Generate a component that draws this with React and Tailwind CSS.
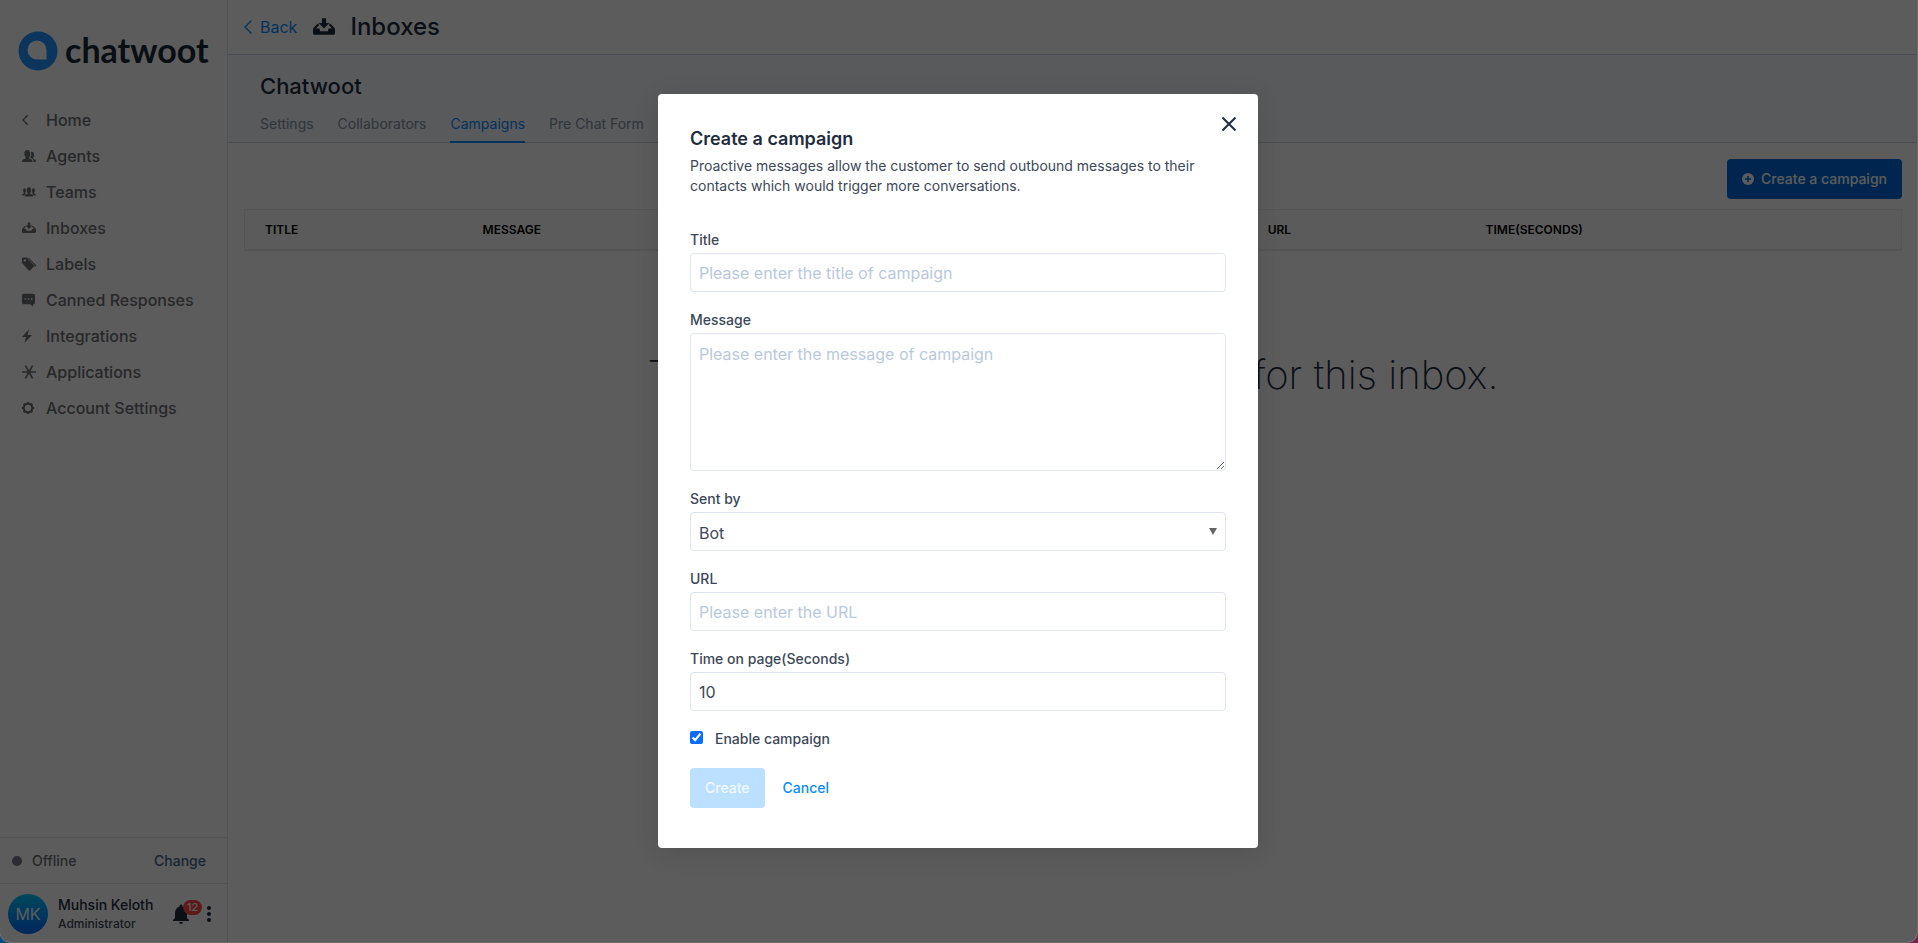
import { MdNotifications } from "react-icons/md";

const GEAR_TEETH = [0, 45, 90, 135, 180, 225, 270, 315];

function Glyph({ name, className }) {
  const common = { viewBox: "0 0 14 14", fill: "currentColor", className, "aria-hidden": true };
  switch (name) {
    case "home":
      return (
        <svg {...common} fill="none" stroke="currentColor" strokeWidth="1.3">
          <path d="M5.6 2.2 1 7l4.6 4.8" />
        </svg>
      );
    case "agents":
      return (
        <svg {...common}>
          <path d="M8.9 10.3C8 10 7.100 9.700 7.100 9.100v-.9c.6-.6.800-1.200.9-1.900.4-.3.500-1.100.2-1.500C8.400 2.800 7.600 1 5.300 1S2.300 2.800 2.500 4.800c-.3.400-.2 1.200.2 1.500.1.700.300 1.300.9 1.900v.9c0 .6-1 .9-2 1.200C.4 10.700 0 11.500 0 13h10.500c0-1.500-.4-2.300-1.600-2.700z" />
          <path d="M12.700 10.500c-.8-.2-1.600-.5-1.600-1v-.7c.5-.5.700-1 .8-1.600.3-.2.400-.9.100-1.200.1-1.600-.4-3.200-2.300-3.200-.3 0-.6 0-.8.100.2.600.3 1.300.3 1.900.3.600.1 1.300-.3 1.800-.1.600-.4 1.200-.8 1.700v.4c.3.300 1 .500 1.600.7 1.300.5 1.800 1.500 1.800 3.600H14c0-1.400-.2-2.200-1.300-2.500z" />
        </svg>
      );
    case "teams":
      return (
        <svg {...common}>
          <path d="M9.800 9.600C9 9.300 8.200 9.100 8.200 8.600V8c.5-.5.700-1 .8-1.600.3-.2.400-.9.100-1.100C9.200 3.600 8.800 2.200 7 2.200S4.800 3.600 4.900 5.300c-.3.200-.2.900.1 1.100.1.600.3 1.100.8 1.600v.6c0 .5-.8.700-1.600 1-.9.300-1.200.9-1.300 2h8.200c-.1-1.100-.4-1.700-1.300-2z" />
          <path d="M4.200 9c-.6-.3-.9-.4-.9-.8v-.4c.4-.4.500-.8.600-1.200.1-.1.200-.5.100-.8C4 4.500 3.900 3.300 2.600 3.300S1.100 4.500 1.200 5.800c-.2.200-.1.700.1.900.1.400.2.800.5 1.100v.5c0 .3-.5.500-.9.700-.6.200-.9.600-.9 1.400h2.500C2.900 9.700 3.500 9.300 4.200 9zM9.800 9c.6-.3.900-.4.900-.8v-.4c-.4-.4-.5-.8-.6-1.200-.1-.1-.2-.5-.1-.8 0-1.300.1-2.500 1.400-2.500s1.500 1.200 1.400 2.500c.2.200.1.700-.1.900-.1.400-.2.800-.5 1.100v.5c0 .3.500.5.900.7.600.2.900.6.900 1.400h-2.500C11.100 9.700 10.500 9.300 9.800 9z" />
        </svg>
      );
    case "inboxes":
      return (
        <svg {...common}>
          <path d="M5.700 1.500h2.600v3h2.100L7 7.900 3.600 4.500h2.100z" />
          <path d="M3.100 4.700.7 7.200C.2 7.700 0 8.100 0 8.700v2.100c0 .7.500 1.200 1.200 1.200h11.600c.7 0 1.200-.5 1.200-1.200V8.700c0-.6-.2-1-.7-1.500l-2.400-2.500-.9.900 2 2.300H9.900L9.500 9.700h-5L4.100 7.900H2l2-2.300z" />
        </svg>
      );
    case "labels":
      return (
        <svg {...common}>
          <path fillRule="evenodd" d="M0 1.700v3.700c0 .5.200.9.500 1.200l6.300 7c.3.400.8.400 1.200 0l3.900-4c.3-.3.300-.8 0-1.200L5.300 1C4.900.6 4.500.4 4 .4H1.200C.5.400 0 1 0 1.700zm2.900 2.900a1.200 1.200 0 1 1 0-2.400 1.200 1.200 0 0 1 0 2.400z" />
          <path d="M5.500.4c.6 0 1 .2 1.400.6l6.800 6.700c.4.400.4.900 0 1.300l-1 1-.3-.6c.3-.5.3-1-.2-1.500z" />
        </svg>
      );
    case "canned":
      return (
        <svg {...common}>
          <path fillRule="evenodd" d="M1.800.7h9.400C12.300.7 13 1.400 13 2.500v7c0 1.100-.7 1.800-1.800 1.800H11v2.400l-2.700-2.400H1.800C.7 11.300 0 10.600 0 9.500v-7C0 1.400.7.700 1.800.7zM2.700 5.300v1.500h1.500V5.300zm3.100 0v1.500h1.500V5.300zm3.100 0v1.500h1.500V5.300z" />
        </svg>
      );
    case "integrations":
      return (
        <svg {...common}>
          <path d="M7 .2 0 8.100h4.100L2.400 13.800 10 5.900H5.500z" />
        </svg>
      );
    case "applications":
      return (
        <svg {...common} fill="none" stroke="currentColor" strokeWidth="1.7">
          <path d="M0 7h14M3.500.6l7 12.800M10.500.6l-7 12.800" />
        </svg>
      );
    case "settings":
      return (
        <svg {...common}>
          <circle cx="6" cy="7" r="4.200" fill="none" stroke="currentColor" strokeWidth="2" />
          {GEAR_TEETH.map((angle) => (
            <path key={angle} d="M4.500 2.600 5 .9h2l.5 1.700z" transform={`rotate(${angle} 6 7)`} />
          ))}
        </svg>
      );
    default:
      return null;
  }
}

const NAV = [
  ["home", "Home"],
  ["agents", "Agents"],
  ["teams", "Teams"],
  ["inboxes", "Inboxes"],
  ["labels", "Labels"],
  ["canned", "Canned Responses"],
  ["integrations", "Integrations"],
  ["applications", "Applications"],
  ["settings", "Account Settings"],
];

const TABS = ["Settings", "Collaborators", "Campaigns", "Pre Chat Form"];

function Sidebar() {
  return (
    <aside className="flex w-[228px] shrink-0 flex-col border-r border-[#e0e6ed] bg-white">
      <a href="#" className="flex h-[102px] items-center gap-[7px] pl-[18px]" aria-label="chatwoot">
        <svg viewBox="0 0 40 40" className="size-10 shrink-0" aria-hidden="true">
          <circle cx="20" cy="20" r="19.500" fill="#1f93ff" />
          <path d="M28.500 28.500H19A9.500 9.500 0 1 1 28.500 19z" fill="#fff" />
        </svg>
        <span className="pb-[2px] font-['Lato',sans-serif] text-[34px] leading-10 font-bold text-[#1b2836]">chatwoot</span>
      </a>
      <nav className="flex grow flex-col">
        {NAV.map(([icon, label]) => (
          <a key={icon} href="#" className="flex h-9 items-center gap-[10px] pl-[22px] text-base font-medium text-[#6e6f73]">
            <Glyph name={icon} className="size-[14px]" />
            {label}
          </a>
        ))}
      </nav>
      <div className="flex h-[46px] items-center border-t border-[#e0e6ed] pr-[21px] pl-3 text-sm">
        <span className="mr-[10px] size-[10px] rounded-full bg-[#778]" />
        <span className="grow font-medium text-[#6e6f73]">Offline</span>
        <button type="button" className="font-medium text-[#47688e]">Change</button>
      </div>
      <div className="flex h-[59px] items-center border-t border-[#e0e6ed] pt-px pr-[10px] pl-2">
        <span className="flex size-10 items-center justify-center rounded-full bg-linear-to-b from-[#00c6ff] to-[#0068ff] text-base text-white">MK</span>
        <div className="ml-[10px] grow">
          <p className="text-sm leading-5 font-medium text-[#1f2d3d]">Muhsin Keloth</p>
          <p className="text-xs leading-[18px] font-medium text-[#3c4858]">Administrator</p>
        </div>
        <button type="button" aria-label="Notifications" className="relative mr-2 text-[#1f2d3d]">
          <MdNotifications className="size-6" />
          <span className="absolute -top-[2px] left-[14px] rounded-full bg-[#ff4949] px-1 text-[11px] leading-[15px] font-medium text-white">12</span>
        </button>
        <button type="button" aria-label="Options" className="flex w-4 flex-col items-center gap-[2px]">
          <span className="size-1 rounded-full bg-[#1f2d3d]" />
          <span className="size-1 rounded-full bg-[#1f2d3d]" />
          <span className="size-1 rounded-full bg-[#1f2d3d]" />
        </button>
      </div>
    </aside>
  );
}

function Page() {
  return (
    <main className="flex min-w-0 grow flex-col bg-white">
      <header className="flex h-[55px] items-center border-b border-[#c8d6e6] px-4">
        <a href="#" className="flex items-center gap-2 text-base text-[#0a8cff]">
          <svg viewBox="0 0 8 14" className="h-[14px] w-2" fill="none" stroke="currentColor" strokeWidth="1.200" aria-hidden="true">
            <path d="M7.500.5 1 7l6.500 6.500" />
          </svg>
          Back
        </a>
        <Glyph name="inboxes" className="ml-4 size-[22px] text-[#1f2d3d]" />
        <h1 className="ml-[15px] text-2xl font-medium text-[#1f2d3d]">Inboxes</h1>
      </header>
      <section className="flex h-[88px] flex-col justify-between border-b border-[#c8d6e6] bg-[#f7f9fc] pl-8">
        <h2 className="pt-[15px] text-[22px] leading-8 font-medium text-[#1f2d3d]">Chatwoot</h2>
        <div className="-mb-px flex gap-6 text-sm">
          {TABS.map((tab) => (
            <a
              key={tab}
              href="#"
              className={
                tab === "Campaigns"
                  ? "border-b-2 border-[#0a8cff] pb-[7px] text-[#0a8cff]"
                  : "border-b-2 border-transparent pb-[7px] text-[#8492a6]"
              }
            >
              {tab}
            </a>
          ))}
        </div>
      </section>
      <section className="flex flex-col py-4 pr-[15px] pl-4">
        <button type="button" className="flex h-10 items-center gap-[7px] self-end rounded bg-[#006bdb] px-[15px] text-sm font-medium text-white">
          <svg viewBox="0 0 12 12" className="size-3" aria-hidden="true">
            <circle cx="6" cy="6" r="6" fill="currentColor" />
            <path d="M6 3v6M3 6h6" stroke="#006bdb" strokeWidth="1.500" />
          </svg>
          Create a campaign
        </button>
        <table className="mt-[10px] w-full table-fixed border border-b-2 border-[#ececec] bg-[#fcfcfc] text-left text-xs">
          <thead>
            <tr className="h-10 [&>th]:pt-px [&>th]:font-semibold">
              <th className="w-[14.370%] pl-5">TITLE</th>
              <th className="w-[13.150%]">MESSAGE</th>
              <td colSpan={2} />
              <th className="w-[13.150%]">URL</th>
              <th className="w-[25.100%]">TIME(SECONDS)</th>
            </tr>
          </thead>
        </table>
        <p className="mt-[100px] text-center text-[40px] leading-[48px] font-extralight text-[#1f2d3d]">
          There are no campaigns created for this inbox.
        </p>
      </section>
    </main>
  );
}

const LABEL = "block pb-[2px] text-sm leading-[23px] font-medium text-[#3c4858]";
const CONTROL =
  "block h-[39px] w-full rounded border border-[#dde4ee] bg-white px-2 text-base text-[#3c4858] placeholder:text-[#b9c9dc]";

function CampaignDialog() {
  return (
    <div role="dialog" aria-modal="true" aria-labelledby="dialog-title" className="relative w-[600px] rounded bg-white px-8 pt-8 pb-10 shadow-[0_4px_24px_rgba(0,0,0,0.12)]">
      <button type="button" aria-label="Close" className="absolute top-[23px] right-[22px] text-[#1f2d3d]">
        <svg viewBox="0 0 14 14" className="size-[14px]" fill="none" stroke="currentColor" strokeWidth="2" aria-hidden="true">
          <path d="M.5.5l13 13M13.500.5l-13 13" />
        </svg>
      </button>
      <h2 id="dialog-title" className="text-lg leading-[26px] font-semibold text-[#1f2d3d]">Create a campaign</h2>
      <p className="mt-1 text-sm text-[#3c4858]">
        Proactive messages allow the customer to send outbound messages to their contacts which would trigger more conversations.
      </p>
      <form className="mt-8 flex flex-col gap-4">
        <div>
          <label htmlFor="title" className={LABEL}>Title</label>
          <input id="title" type="text" placeholder="Please enter the title of campaign" className={CONTROL} />
        </div>
        <div>
          <label htmlFor="message" className={LABEL}>Message</label>
          <textarea id="message" placeholder="Please enter the message of campaign" className="block h-[138px] w-full resize rounded border border-[#dde4ee] bg-white p-2 text-base text-[#3c4858] placeholder:text-[#b9c9dc]" />
        </div>
        <div>
          <label htmlFor="sender" className={LABEL}>Sent by</label>
          <div className="relative">
            <select id="sender" className={CONTROL + " appearance-none pt-[2px]"}>
              <option>Bot</option>
            </select>
            <svg viewBox="0 0 8 7" className="pointer-events-none absolute top-4 right-[9px] h-[7px] w-2" aria-hidden="true">
              <path d="M0 0h8L4 7z" fill="#666" />
            </svg>
          </div>
        </div>
        <div>
          <label htmlFor="url" className={LABEL}>URL</label>
          <input id="url" type="text" placeholder="Please enter the URL" className={CONTROL} />
        </div>
        <div>
          <label htmlFor="time" className={LABEL}>Time on page(Seconds)</label>
          <input id="time" type="text" defaultValue="10" className={CONTROL} />
        </div>
        <div className="flex h-[25px] items-start gap-3">
          <input id="enabled" type="checkbox" defaultChecked className="mt-1 size-[13px] accent-[#0a6cff]" />
          <label htmlFor="enabled" className={LABEL}>Enable campaign</label>
        </div>
        <div className="flex items-center gap-[18px] text-sm font-medium">
          <button type="submit" disabled className="h-10 rounded bg-[#bce0ff] px-[15px] text-[#f0f8ff]">Create</button>
          <button type="button" className="text-[#0a8cff]">Cancel</button>
        </div>
      </form>
    </div>
  );
}

export default function App() {
  return (
    <div className="flex min-h-screen bg-linear-to-r from-[#0b4a80] to-[#7a1c4c] font-['Inter',sans-serif]">
      <div className="relative flex grow overflow-hidden rounded-b-[10px] border-r border-b border-[#6c6c6c]">
        <Sidebar />
        <Page />
        <div className="absolute inset-0 flex items-center justify-center bg-black/64 pr-px">
          <CampaignDialog />
        </div>
      </div>
    </div>
  );
}
